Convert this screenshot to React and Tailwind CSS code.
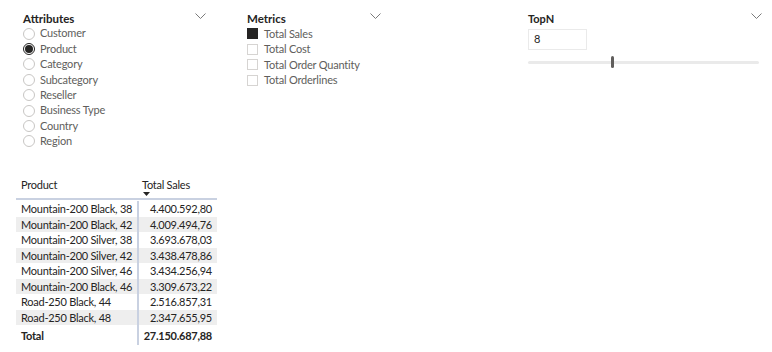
import React from "react";

const font = { fontFamily: 'Lato, "Noto Sans", sans-serif' };

function Chevron() {
  return (
    <svg width="11" height="7" viewBox="0 0 11 7" className="block">
      <path d="M0.5 0.5 L5.5 5.5 L10.5 0.5" fill="none" stroke="#7a7a7a" strokeWidth="1" />
    </svg>
  );
}

function Radio({ checked, label }) {
  return (
    <div className="flex h-[15.4px] items-center">
      <div
        className={
          "flex h-[12px] w-[12px] items-center justify-center rounded-full border " +
          (checked ? "border-[#252423]" : "border-[#c8c6c4]")
        }
      >
        {checked && <div className="h-[8px] w-[8px] rounded-full bg-[#252423]" />}
      </div>
      <span className="ml-[5px] whitespace-nowrap text-[11px] tracking-[-0.2px] text-[#605e5c]">{label}</span>
    </div>
  );
}

function Check({ checked, label }) {
  return (
    <div className="flex h-[15.5px] items-center">
      <div
        className={
          "h-[11px] w-[11px] border " +
          (checked ? "border-[#252423] bg-[#252423]" : "border-[#d6d4d2] bg-white")
        }
      />
      <span className="ml-[6px] whitespace-nowrap text-[11px] tracking-[-0.2px] text-[#605e5c]">{label}</span>
    </div>
  );
}

const rows = [
  ["Mountain-200 Black, 38", "4.400.592,80"],
  ["Mountain-200 Black, 42", "4.009.494,76"],
  ["Mountain-200 Silver, 38", "3.693.678,03"],
  ["Mountain-200 Silver, 42", "3.438.478,86"],
  ["Mountain-200 Silver, 46", "3.434.256,94"],
  ["Mountain-200 Black, 46", "3.309.673,22"],
  ["Road-250 Black, 44", "2.516.857,31"],
  ["Road-250 Black, 48", "2.347.655,95"],
];

export default function App() {
  return (
    <div className="relative h-[352px] w-[772px] overflow-hidden bg-white" style={font}>
      <div className="flex pt-[11px]">
        {/* Attributes */}
        <div className="ml-[23px] w-[185px]">
          <div className="flex h-[16px] items-center justify-between">
            <span className="text-[11.5px] font-bold text-[#252423]">Attributes</span>
            <div className="-mt-[6px] mr-[2px]"><Chevron /></div>
          </div>
          <div className="mt-[-1px]">
            {["Customer", "Product", "Category", "Subcategory", "Reseller", "Business Type", "Country", "Region"].map(
              (l) => (
                <Radio key={l} label={l} checked={l === "Product"} />
              )
            )}
          </div>
        </div>
        {/* Metrics */}
        <div className="ml-[39px] w-[134px]">
          <div className="flex h-[16px] items-center justify-between">
            <span className="text-[11.5px] font-bold text-[#252423]">Metrics</span>
            <div className="-mt-[6px]"><Chevron /></div>
          </div>
          <div className="mt-[-1px]">
            {["Total Sales", "Total Cost", "Total Order Quantity", "Total Orderlines"].map((l) => (
              <Check key={l} label={l} checked={l === "Total Sales"} />
            ))}
          </div>
        </div>
        {/* TopN */}
        <div className="ml-[147px] w-[232px]">
          <div className="flex h-[16px] items-center justify-between">
            <span className="text-[11px] font-bold text-[#252423]">TopN</span>
            <div className="-mt-[6px] -mr-[2px]"><Chevron /></div>
          </div>
          <div className="mt-[2px] flex h-[21px] w-[59px] items-center border border-[#eaeaea] pl-[5px] text-[11px] text-[#252423]">
            8
          </div>
          <div className="relative mt-[6px] h-[12px] w-[231px]">
            <div className="absolute left-0 right-0 top-[5px] h-[3px] rounded bg-[#eaeaea]" />
            <div className="absolute left-[83px] top-0 h-[12px] w-[3px] rounded bg-[#605e5c]" />
          </div>
        </div>
      </div>

      {/* Table */}
      <div className="ml-[16px] mt-[24px] w-[201px] text-[11px] tracking-[-0.25px] text-[#252423]">
        <div className="flex h-[27px] border-b-2 border-[#c9d1e1]">
          <div className="w-[121px] pl-[5px] pt-[4px]">Product</div>
          <div className="relative flex-1 pl-[5px] pt-[4px]">
            Total Sales
            <svg className="absolute left-[6px] top-[19px]" width="7" height="4" viewBox="0 0 7 4">
              <path d="M0 0 H7 L3.5 4 Z" fill="#252423" />
            </svg>
          </div>
        </div>
        <div className="pt-[1px]">
          {rows.map(([a, b], i) => (
            <div key={a} className={"flex h-[15.5px] items-center " + (i % 2 === 1 ? "bg-[#eeeeee]" : "")}>
              <div className="w-[121px] whitespace-nowrap pl-[5px] leading-none">{a}</div>
              <div className="flex h-full flex-1 items-center justify-end border-l-2 border-[#c9d1e1] pr-[5px] leading-none">
                {b}
              </div>
            </div>
          ))}
          <div className="flex h-[20px] items-center font-bold">
            <div className="w-[121px] pl-[5px] leading-none">Total</div>
            <div className="flex h-full flex-1 items-center justify-end border-l-2 border-[#c9d1e1] pr-[5px] leading-none">
              27.150.687,88
            </div>
          </div>
        </div>
      </div>
    </div>
  );
}
